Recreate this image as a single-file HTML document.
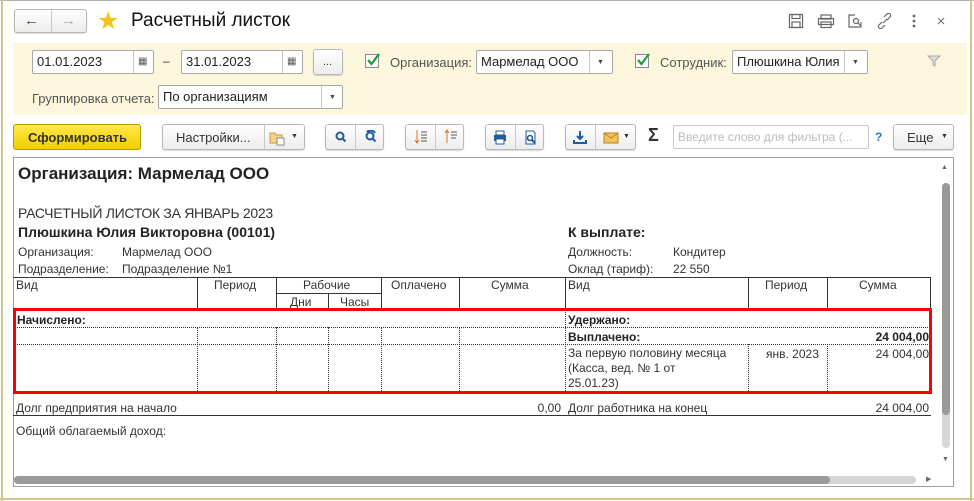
<!DOCTYPE html>
<html><head><meta charset="utf-8"><style>
*{margin:0;padding:0;box-sizing:border-box}
body{width:974px;height:501px;background:#fff;font-family:"Liberation Sans",Arial,sans-serif;font-size:12px;color:#333;position:relative;overflow:hidden}
.a{position:absolute;white-space:nowrap}
.btn{position:absolute;border:1px solid #b8b8b8;border-radius:3px;background:linear-gradient(#fff,#ececec);box-shadow:0 1px 1px rgba(0,0,0,.15)}
.inp{position:absolute;border:1px solid #a8a8a8;border-radius:2px;background:#fff;font-size:13px;padding:0 4px;line-height:22px;color:#222}
.sep{position:absolute;top:0;bottom:0;border-left:1px solid #c8c8c8}
.cb{position:absolute;width:14px;height:14px;border:1px solid #888;background:#fff}
.v{position:absolute;border-left:1px solid #333}
.vd{position:absolute;border-left:1px dotted #333}
.hd{position:absolute;border-top:1px dotted #333}
.t{position:absolute;white-space:nowrap;font-size:12px;color:#333}
.r{position:absolute;white-space:nowrap;font-size:12px;color:#333;text-align:right}
.arr{position:absolute;top:8px;font-size:7px;line-height:7px;color:#444}
</style></head><body>
<div class="a" style="left:0;top:0;width:974px;height:1px;background:#b0b0b0"></div>
<div class="a" style="left:1px;top:0;width:2px;height:501px;background:#d4c48a"></div>
<div class="a" style="left:970px;top:0;width:2px;height:501px;background:#d4c48a"></div>
<div class="a" style="left:0;top:498px;width:974px;height:2px;background:#d4c48a"></div>

<div class="btn" style="left:14px;top:9px;width:73px;height:24px"><div class="sep" style="left:36px"></div>
<span class="a" style="left:9px;top:2px;font-size:15px;color:#444">&#8592;</span><span class="a" style="left:46px;top:2px;font-size:15px;color:#aaa">&#8594;</span></div>
<span class="a" style="left:97px;top:6px;font-size:25px;color:#f2c21a">&#9733;</span>
<span class="a" style="left:131px;top:10px;font-size:19px;color:#111">Расчетный листок</span>
<svg class="a" style="left:788px;top:13px" width="170" height="16" viewBox="0 0 170 16" fill="none" stroke="#666" stroke-width="1.2">
<rect x="1.5" y="1.5" width="13" height="13"/><rect x="4" y="1.5" width="8" height="4"/><rect x="4" y="9" width="8" height="5.5"/>
<rect x="33" y="2" width="10" height="4"/><rect x="30.5" y="5.5" width="15" height="6"/><rect x="33" y="9" width="10" height="5.5"/>
<path d="M67 2h-6v12h12v-5"/><circle cx="68" cy="8" r="2.5"/><path d="M70 10l2.5 2.5"/>
<path d="M94 9l-3 3a2 2 0 0 0 3 3l3-3M99 7l3-3a2 2 0 0 0-3-3l-3 3M95 10l4-4"/>
<circle cx="126" cy="3" r=".8" fill="#666"/><circle cx="126" cy="8" r=".8" fill="#666"/><circle cx="126" cy="13" r=".8" fill="#666"/>
<path d="M150 5l6 6M156 5l-6 6" stroke="#777"/>
</svg>

<div class="a" style="left:13px;top:43px;width:954px;height:72px;background:#fcf7dc"></div>
<div class="inp" style="left:32px;top:50px;width:122px;height:24px">01.01.2023<div class="sep" style="left:100px"></div><span class="a" style="left:105px;top:0;font-size:10px;color:#555">&#9638;</span></div>
<span class="a" style="left:163px;top:54px">–</span>
<div class="inp" style="left:181px;top:50px;width:122px;height:24px">31.01.2023<div class="sep" style="left:100px"></div><span class="a" style="left:105px;top:0;font-size:10px;color:#555">&#9638;</span></div>
<div class="btn" style="left:313px;top:49px;width:30px;height:26px"><span class="a" style="left:9px;top:6px;font-size:11px">...</span></div>
<div class="cb" style="left:365px;top:54px"></div>
<svg class="a" style="left:365px;top:52px" width="16" height="16"><path d="M3 8l3.5 4L14 2" stroke="#1a9a3a" stroke-width="2.2" fill="none"/></svg>
<span class="a" style="left:390px;top:55px;color:#555;font-size:13px">Организация:</span>
<div class="inp" style="left:476px;top:50px;width:137px;height:24px">Мармелад ООО<div class="sep" style="left:112px"></div><span class="arr" style="left:120px">&#9660;</span></div>
<div class="cb" style="left:635px;top:54px"></div>
<svg class="a" style="left:635px;top:52px" width="16" height="16"><path d="M3 8l3.5 4L14 2" stroke="#1a9a3a" stroke-width="2.2" fill="none"/></svg>
<span class="a" style="left:660px;top:55px;color:#555;font-size:13px">Сотрудник:</span>
<div class="inp" style="left:732px;top:50px;width:136px;height:24px;overflow:hidden">Плюшкина Юлия І<div class="sep" style="left:111px;background:#fff;width:25px"></div><span class="arr" style="left:119px">&#9660;</span></div>
<svg class="a" style="left:927px;top:55px" width="14" height="12"><path d="M1 1h12l-5 5v5l-2-1v-4z" fill="#ddd" stroke="#aaa"/></svg>
<span class="a" style="left:32px;top:91px;color:#555;font-size:13px">Группировка отчета:</span>
<div class="inp" style="left:158px;top:85px;width:185px;height:24px">По организациям<div class="sep" style="left:162px"></div><span class="arr" style="left:170px">&#9660;</span></div>

<div class="a" style="left:13px;top:124px;width:128px;height:26px;border:1px solid #b49b00;border-radius:3px;background:linear-gradient(#ffe84a,#f2cf00);font-weight:bold;font-size:13px;color:#333;padding:5px 0 0 14px">Сформировать</div>
<div class="btn" style="left:162px;top:124px;width:143px;height:26px"><span class="a" style="left:13px;top:5px;font-size:13px">Настройки...</span><div class="sep" style="left:101px"></div>
<svg class="a" style="left:106px;top:5px" width="16" height="16"><path d="M1 3h5l1 2h6v8H1z" fill="#f2d38a" stroke="#c99a3a"/><rect x="8" y="8" width="7" height="7" fill="#fff" stroke="#888"/></svg>
<span class="a" style="left:128px;top:8px;font-size:7px">&#9660;</span></div>
<div class="btn" style="left:325px;top:124px;width:59px;height:26px"><div class="sep" style="left:29px"></div>
<svg class="a" style="left:8px;top:5px" width="46" height="14" fill="none" stroke="#1f5c99" stroke-width="2"><circle cx="6" cy="6" r="3.5"/><path d="M8.5 8.5l3 3"/><circle cx="36" cy="6" r="3.5"/><path d="M38.5 8.5l3 3M33 2a5 5 0 0 1 8 1"/></svg></div>
<div class="btn" style="left:405px;top:124px;width:59px;height:26px"><div class="sep" style="left:29px"></div>
<svg class="a" style="left:8px;top:4px" width="46" height="16" stroke-width="1"><path d="M3 1v13M1 11l2 3 2-3" stroke="#e0702a" fill="none"/><path d="M7 3h6M7 6h6M7 9h6M7 12h6" stroke="#555"/><path d="M33 14v-13M31 4l2-3 2 3" stroke="#e0702a" fill="none"/><path d="M37 3h6M37 6h6M37 9h5" stroke="#555"/></svg></div>
<div class="btn" style="left:485px;top:124px;width:59px;height:26px"><div class="sep" style="left:29px"></div>
<svg class="a" style="left:7px;top:5px" width="46" height="16"><rect x="3" y="1" width="8" height="4" fill="#fff" stroke="#1f5c99"/><rect x="1" y="5" width="12" height="6" fill="#1f5c99"/><rect x="3" y="9" width="8" height="5" fill="#fff" stroke="#1f5c99"/><path d="M33 1h7l2 2v11h-9z" fill="#fff" stroke="#1f5c99"/><circle cx="37" cy="8" r="2.5" fill="none" stroke="#1f5c99" stroke-width="1.6"/><path d="M39 10l3 3" stroke="#1f5c99" stroke-width="2"/></svg></div>
<div class="btn" style="left:565px;top:124px;width:71px;height:26px"><div class="sep" style="left:29px"></div>
<svg class="a" style="left:7px;top:5px" width="60" height="16"><path d="M7 1v8M4 6l3 3 3-3" stroke="#1f5c99" stroke-width="2" fill="none"/><path d="M1 10v3h12v-3" stroke="#1f5c99" stroke-width="2" fill="none"/><rect x="31" y="3" width="14" height="10" fill="#f4c060" stroke="#c08020"/><path d="M31 3l7 5 7-5" stroke="#c08020" fill="none"/></svg>
<span class="a" style="left:57px;top:8px;font-size:7px">&#9660;</span></div>
<span class="a" style="left:648px;top:125px;font-size:18px;color:#333;font-weight:bold">&Sigma;</span>
<div class="inp" style="left:673px;top:125px;width:196px;height:24px;color:#bbb;border-color:#c8c8c8;font-size:12px">Введите слово для фильтра (...</div>
<span class="a" style="left:875px;top:130px;color:#2a7ac0;font-weight:bold">?</span>
<div class="btn" style="left:893px;top:124px;width:61px;height:26px"><span class="a" style="left:13px;top:5px;font-size:13px">Еще</span><span class="a" style="left:47px;top:8px;font-size:7px">&#9660;</span></div>

<div class="a" style="left:13px;top:157px;width:941px;height:330px;border:1px solid #a0a0a0"></div>
<span class="a" style="left:941px;top:164px;font-size:7px;color:#666">&#9650;</span>
<div class="a" style="left:942px;top:183px;width:8px;height:265px;background:#d6d6d6;border-radius:4px"></div>
<div class="a" style="left:942px;top:183px;width:8px;height:232px;background:#9a9a9a;border-radius:4px"></div>
<span class="a" style="left:942px;top:456px;font-size:7px;color:#666">&#9660;</span>
<div class="a" style="left:14px;top:476px;width:902px;height:8px;background:#d6d6d6;border-radius:4px"></div>
<div class="a" style="left:14px;top:476px;width:816px;height:8px;background:#9a9a9a;border-radius:4px"></div>
<span class="a" style="left:926px;top:475px;font-size:7px;color:#666">&#9654;</span>

<span class="a" style="left:18px;top:164px;font-size:17px;font-weight:bold;color:#222">Организация: Мармелад ООО</span>
<span class="t" style="left:18px;top:205px;font-size:14px;letter-spacing:-.3px">РАСЧЕТНЫЙ ЛИСТОК ЗА ЯНВАРЬ 2023</span>
<span class="t" style="left:18px;top:224px;font-size:14px;font-weight:bold;color:#222">Плюшкина Юлия Викторовна (00101)</span>
<span class="t" style="left:18px;top:245px">Организация:</span><span class="t" style="left:122px;top:245px">Мармелад ООО</span>
<span class="t" style="left:18px;top:262px">Подразделение:</span><span class="t" style="left:122px;top:262px">Подразделение №1</span>
<span class="t" style="left:568px;top:224px;font-size:14px;font-weight:bold;color:#222">К выплате:</span>
<span class="t" style="left:568px;top:245px">Должность:</span><span class="t" style="left:673px;top:245px">Кондитер</span>
<span class="t" style="left:568px;top:262px">Оклад (тариф):</span><span class="t" style="left:673px;top:262px">22 550</span>

<div class="a" style="left:13px;top:277px;width:918px;border-top:1px solid #333"></div>
<div class="v" style="left:197px;top:277px;height:33px"></div>
<div class="v" style="left:276px;top:277px;height:33px"></div>
<div class="v" style="left:381px;top:277px;height:33px"></div>
<div class="v" style="left:459px;top:277px;height:33px"></div>
<div class="v" style="left:565px;top:277px;height:33px"></div>
<div class="v" style="left:748px;top:277px;height:33px"></div>
<div class="v" style="left:827px;top:277px;height:33px"></div>
<div class="v" style="left:930px;top:277px;height:33px"></div>
<div class="v" style="left:328px;top:293px;height:17px"></div>
<div class="a" style="left:276px;top:293px;width:105px;border-top:1px solid #333"></div>
<span class="t" style="left:16px;top:278px">Вид</span>
<span class="t" style="left:214px;top:278px">Период</span>
<span class="t" style="left:303px;top:278px">Рабочие</span>
<span class="t" style="left:290px;top:295px">Дни</span>
<span class="t" style="left:340px;top:295px">Часы</span>
<span class="t" style="left:391px;top:278px">Оплачено</span>
<span class="t" style="left:491px;top:278px">Сумма</span>
<span class="t" style="left:568px;top:278px">Вид</span>
<span class="t" style="left:765px;top:278px">Период</span>
<span class="t" style="left:859px;top:278px">Сумма</span>

<div class="hd" style="left:14px;top:327px;width:916px"></div>
<div class="hd" style="left:14px;top:344px;width:916px"></div>
<div class="vd" style="left:197px;top:327px;height:66px"></div>
<div class="vd" style="left:276px;top:327px;height:66px"></div>
<div class="vd" style="left:328px;top:327px;height:66px"></div>
<div class="vd" style="left:381px;top:327px;height:66px"></div>
<div class="vd" style="left:459px;top:327px;height:66px"></div>
<div class="vd" style="left:565px;top:310px;height:83px"></div>
<div class="vd" style="left:748px;top:344px;height:49px"></div>
<div class="vd" style="left:827px;top:344px;height:49px"></div>
<span class="t" style="left:17px;top:313px;font-weight:bold;color:#222">Начислено:</span>
<span class="t" style="left:568px;top:313px;font-weight:bold;color:#222">Удержано:</span>
<span class="t" style="left:568px;top:330px;font-weight:bold;color:#222">Выплачено:</span>
<span class="r" style="left:800px;width:129px;top:330px;font-weight:bold;color:#222">24 004,00</span>
<span class="t" style="left:568px;top:346px;line-height:15px">За первую половину месяца<br>(Касса, вед. № 1 от<br>25.01.23)</span>
<span class="t" style="left:766px;top:347px">янв. 2023</span>
<span class="r" style="left:800px;width:129px;top:347px">24 004,00</span>
<div class="a" style="left:13px;top:308px;width:919px;height:86px;border:3px solid #f00"></div>

<span class="t" style="left:16px;top:401px">Долг предприятия на начало</span>
<span class="r" style="left:460px;width:101px;top:401px">0,00</span>
<span class="t" style="left:568px;top:401px">Долг работника на конец</span>
<span class="r" style="left:800px;width:129px;top:401px">24 004,00</span>
<div class="a" style="left:13px;top:415px;width:918px;border-top:1px solid #333"></div>
<span class="t" style="left:16px;top:424px">Общий облагаемый доход:</span>
</body></html>
